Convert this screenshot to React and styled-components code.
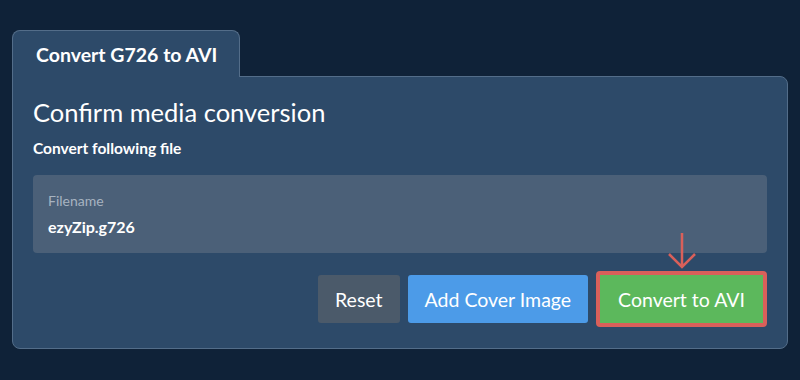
import React from "react";
import styled, { createGlobalStyle } from "styled-components";

const Global = createGlobalStyle`
  html, body { margin: 0; padding: 0; background: #0f2238; }
  body { font-family: Lato, "Noto Sans", sans-serif; color: #fff; }
`;

const Page = styled.div`
  width: 800px;
  height: 380px;
  box-sizing: border-box;
  padding: 30px 12px 0;
`;

const Tabs = styled.div`
  display: flex;
  position: relative;
  z-index: 1;
  margin-bottom: -1px;
`;

const Tab = styled.div`
  width: 228px;
  height: 47px;
  box-sizing: border-box;
  padding-left: 23px;
  display: flex;
  align-items: center;
  background: #2d4a69;
  border: 1px solid #536d89;
  border-bottom: none;
  border-radius: 8px 8px 0 0;
  font-size: 19.5px;
  font-weight: 700;
`;

const Panel = styled.div`
  background: #2d4a69;
  border: 1px solid #536d89;
  border-radius: 0 8px 8px 8px;
  padding: 19px 20px 21px;
`;

const Title = styled.h2`
  margin: 0;
  font-size: 25.5px;
  font-weight: 400;
  line-height: 32px;
`;

const Sub = styled.p`
  margin: 10px 0 0;
  font-size: 15.5px;
  font-weight: 700;
  line-height: 20px;
`;

const FileBox = styled.div`
  margin-top: 17px;
  background: #4b6078;
  border-radius: 4px;
  height: 78px;
  box-sizing: border-box;
  padding: 18px 15px 0;
`;

const Label = styled.div`
  font-size: 14px;
  color: #a7b3c0;
  line-height: 16px;
`;

const FileName = styled.div`
  margin-top: 8px;
  font-size: 16px;
  font-weight: 700;
  line-height: 20px;
`;

const Actions = styled.div`
  margin-top: 18px;
  display: flex;
  justify-content: flex-end;
  align-items: center;
  gap: 8px;
`;

const Button = styled.button`
  height: 48px;
  padding: 0 ${(p) => p.$px || 17}px;
  border: none;
  border-radius: ${(p) => (p.$flat ? 0 : 3)}px;
  font-family: inherit;
  font-size: 19.5px;
  color: #fff;
  background: ${(p) => p.$bg};
  cursor: pointer;
`;

const Highlight = styled.div`
  position: relative;
  border: 4px solid #d9605a;
  border-radius: 4px;
  display: flex;
`;

const Arrow = styled.svg`
  position: absolute;
  left: 50%;
  top: -42px;
  transform: translateX(-50%);
`;

export default function App() {
  return (
    <>
      <Global />
      <Page>
        <Tabs>
          <Tab>Convert G726 to AVI</Tab>
        </Tabs>
        <Panel>
          <Title>Confirm media conversion</Title>
          <Sub>Convert following file</Sub>
          <FileBox>
            <Label>Filename</Label>
            <FileName>ezyZip.g726</FileName>
          </FileBox>
          <Actions>
            <Button $bg="#4b5a6a" $px={17}>Reset</Button>
            <Button $bg="#4c9be8" $px={17}>Add Cover Image</Button>
            <Highlight>
              <Arrow width="30" height="36" viewBox="0 0 30 36">
                <path d="M15 0 V34 M2 21 L15 34 L28 21" fill="none" stroke="#d9605a" strokeWidth="2.5" />
              </Arrow>
              <Button $bg="#5cb85c" $px={18} $flat>Convert to AVI</Button>
            </Highlight>
          </Actions>
        </Panel>
      </Page>
    </>
  );
}
